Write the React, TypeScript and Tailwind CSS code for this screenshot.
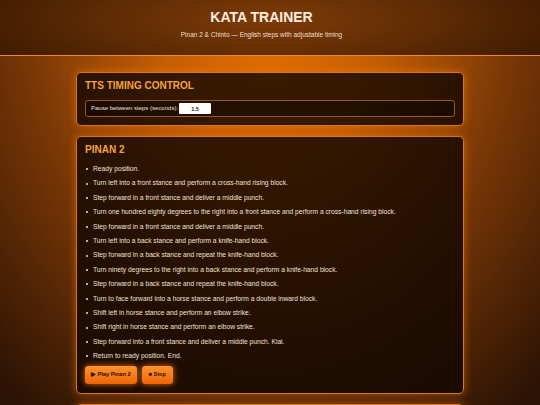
import { useState } from "react";

const pinan2 = [
  "Ready position.",
  "Turn left into a front stance and perform a cross-hand rising block.",
  "Step forward in a front stance and deliver a middle punch.",
  "Turn one hundred eighty degrees to the right into a front stance and perform a cross-hand rising block.",
  "Step forward in a front stance and deliver a middle punch.",
  "Turn left into a back stance and perform a knife-hand block.",
  "Step forward in a back stance and repeat the knife-hand block.",
  "Turn ninety degrees to the right into a back stance and perform a knife-hand block.",
  "Step forward in a back stance and repeat the knife-hand block.",
  "Turn to face forward into a horse stance and perform a double inward block.",
  "Shift left in horse stance and perform an elbow strike.",
  "Shift right in horse stance and perform an elbow strike.",
  "Step forward into a front stance and deliver a middle punch. Kiai.",
  "Return to ready position. End.",
];

const chinto = [
  "Ready position.",
  "Step right into a crane stance and perform a double block.",
  "Step forward and deliver a middle punch.",
  "Return to ready position. End.",
];

function Card({ children }: { children: React.ReactNode }) {
  return (
    <section className="rounded-[5px] border border-[#d8761c] bg-[rgba(16,6,0,0.8)] px-[8px] pt-[7px] pb-[8px] shadow-[0_0_9px_rgba(255,128,16,0.55)]">
      {children}
    </section>
  );
}

function KataCard({ name, steps }: { name: string; steps: string[] }) {
  return (
    <Card>
      <h2 className="text-[10px] leading-[12px] font-bold uppercase text-[#f6a23c]">
        {name}
      </h2>
      <ul className="mt-[6px]">
        {steps.map((s, i) => (
          <li
            key={i}
            className="flex items-center gap-[5px] pl-[1px] text-[6.7px] leading-[14.4px] text-[#efe2d4]"
          >
            <span className="w-[2px] h-[2px] rounded-full bg-[#efe2d4] shrink-0" />
            {s}
          </li>
        ))}
      </ul>
      <div className="flex gap-[5px] mt-[2px] mb-[1px]">
        <button className="h-[18px] px-[6px] rounded-[3px] bg-gradient-to-b from-[#ff922e] to-[#ec6504] text-[5.6px] font-bold text-[#2a1000] shadow-[0_0_6px_rgba(255,120,10,0.85)]">
          ▶ Play {name}
        </button>
        <button className="h-[18px] px-[7px] rounded-[3px] bg-gradient-to-b from-[#ff922e] to-[#ec6504] text-[5.6px] font-bold text-[#2a1000] shadow-[0_0_6px_rgba(255,120,10,0.85)]">
          ■ Stop
        </button>
      </div>
    </Card>
  );
}

export default function App() {
  const [pause, setPause] = useState("1.5");

  return (
    <div className="min-h-screen font-['Liberation_Sans',Arial,sans-serif] bg-[radial-gradient(ellipse_75%_95%_at_50%_0%,#e97500_0%,#c25c04_30%,#7a3806_60%,#2c1304_100%)]">
      <header className="h-[56px] border-b border-[#e88a38] bg-[radial-gradient(ellipse_60%_140%_at_50%_35%,#7e3c08_0%,#5c2a04_55%,#3a1900_100%)] flex flex-col items-center pt-[9px] pr-[17px]">
        <h1 className="text-[14px] leading-[16px] font-bold text-[#fbefe0]">
          KATA TRAINER
        </h1>
        <p className="mt-[5px] text-[6.5px] text-[#f1dfcc]">
          Pinan 2 &amp; Chinto — English steps with adjustable timing
        </p>
      </header>

      <main className="max-w-[388px] mx-auto pt-[16px] flex flex-col gap-[10px] pb-[20px]">
        <Card>
          <h2 className="text-[10px] leading-[12px] font-bold uppercase text-[#f6a23c]">
            TTS Timing Control
          </h2>
          <div className="mt-[8px] h-[17px] flex items-center gap-[1px] px-[5px] rounded-[3px] border border-[#9c5720] bg-[rgba(0,0,0,0.35)]">
            <label className="text-[6px] text-[#efe2d4]">
              Pause between steps (seconds):
            </label>
            <input
              value={pause}
              onChange={(e) => setPause(e.target.value)}
              className="w-[32px] h-[11px] rounded-[1px] bg-white text-center text-[5.5px] font-bold text-[#222] outline-none"
            />
          </div>
        </Card>

        <KataCard name="Pinan 2" steps={pinan2} />
        <KataCard name="Chinto" steps={chinto} />
      </main>
    </div>
  );
}
